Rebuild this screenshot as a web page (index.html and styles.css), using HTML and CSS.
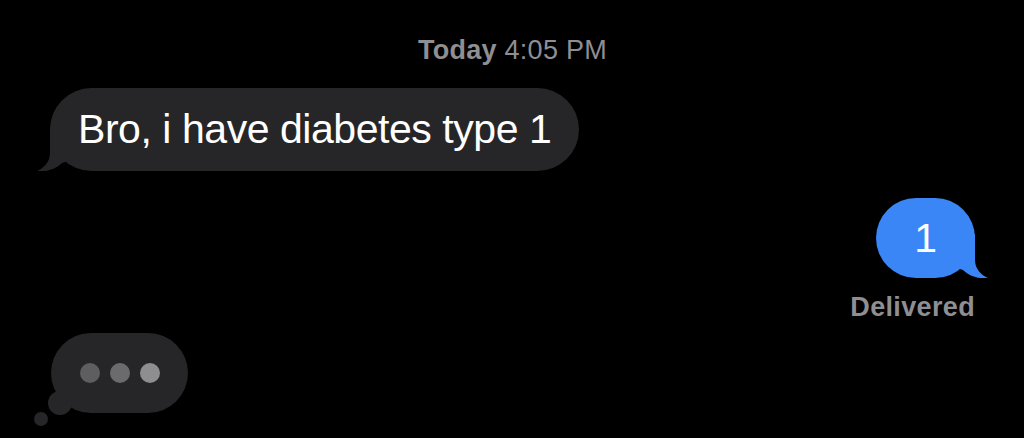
FILE: index.html
```html
<!DOCTYPE html>
<html>
<head>
<meta charset="utf-8">
<link rel="stylesheet" href="styles.css">
</head>
<body>
<div class="thread">
  <div class="stamp"><b>Today</b> 4:05 PM</div>
  <div class="row in">
    <div class="bubble grey">Bro, i have diabetes type 1
      <svg class="tail tail-left" viewBox="0 0 44 44" width="44" height="44"><path d="M14 0 L14 26 C14 35 8 41 1 44 C11 45 20 42 26 36 L44 30 L44 0 Z"/></svg>
    </div>
  </div>
  <div class="row out">
    <div class="bubble blue">1
      <svg class="tail tail-right" viewBox="0 0 44 44" width="44" height="44"><path d="M14 0 L14 26 C14 35 8 41 1 44 C11 45 20 42 26 36 L44 30 L44 0 Z"/></svg>
    </div>
  </div>
  <div class="status">Delivered</div>
  <div class="row in">
    <div class="typing">
      <span class="dot d1"></span><span class="dot d2"></span><span class="dot d3"></span>
      <span class="puff big"></span><span class="puff small"></span>
    </div>
  </div>
</div>
</body>
</html>
```
FILE: styles.css
```css
html, body {
  margin: 0;
  padding: 0;
  background: #000;
  height: 100%;
  overflow: hidden;
}
.thread {
  display: flex;
  flex-direction: column;
  padding: 35px 49px 0 50px;
  font-family: "Liberation Sans", Arial, sans-serif;
}
.stamp {
  text-align: center;
  color: #8e8e93;
  font-size: 27px;
  line-height: 30px;
  letter-spacing: 0.25px;
}
.stamp b { font-weight: 700; }
.row { display: flex; }
.row.in { justify-content: flex-start; }
.row.out { justify-content: flex-end; }
.bubble {
  position: relative;
  color: #fff;
  font-size: 41px;
  line-height: 48px;
  border-radius: 42px;
}
.grey {
  margin-top: 23px;
  background: #262628;
  padding: 17px 28px 18px 28px;
  letter-spacing: -0.45px;
}
.blue {
  margin-top: 27px;
  background: #3a86f6;
  padding: 16px 38px;
  border-radius: 40px;
}
.tail {
  position: absolute;
  bottom: 0;
}
.tail-left { left: -14px; fill: #262628; }
.tail-right { right: -14px; fill: #3a86f6; transform: scaleX(-1); }
.status {
  align-self: flex-end;
  margin-top: 14px;
  color: #8e8e93;
  font-size: 27px;
  line-height: 30px;
  font-weight: 700;
  letter-spacing: 0.35px;
}
.typing {
  position: relative;
  margin-top: 11px;
  margin-left: 1px;
  display: flex;
  gap: 10px;
  padding: 30px 28px 30px 29px;
  background: #262628;
  border-radius: 41px;
}
.dot {
  width: 20px;
  height: 20px;
  border-radius: 50%;
}
.d1 { background: #5e5e61; }
.d2 { background: #6b6b6e; }
.d3 { background: #8e8e91; }
.puff {
  position: absolute;
  border-radius: 50%;
  background: #262628;
}
.puff.big { width: 24px; height: 24px; left: -3px; top: 58px; }
.puff.small { width: 14px; height: 14px; left: -17px; top: 79px; }
```
